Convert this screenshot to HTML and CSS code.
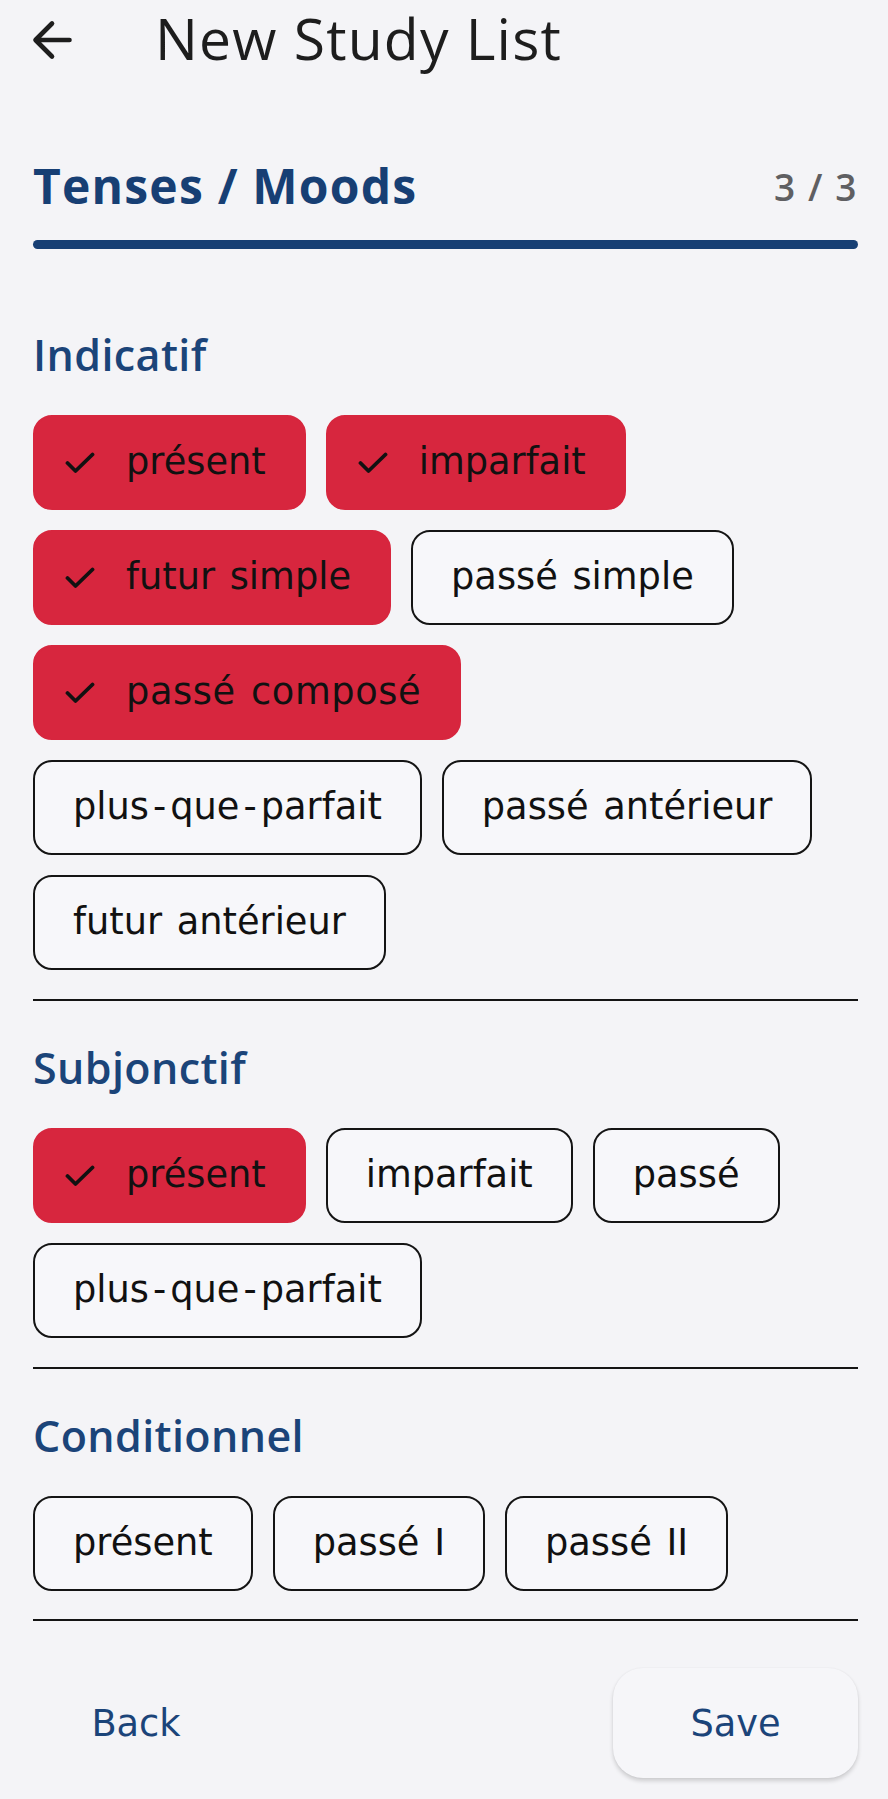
FILE: index.html
```html
<!DOCTYPE html>
<html lang="fr">
<head>
<meta charset="utf-8">
<title>New Study List</title>
<link rel="stylesheet" href="styles.css">
</head>
<body>
<div class="page">
  <header class="appbar">
    <svg class="back-icon" width="44" height="44" viewBox="0 0 44 44" aria-hidden="true">
      <path d="M38.5 22H5.5M21 5.5L4.5 22L21 38.5" fill="none" stroke="#1d1d1d" stroke-width="4.6" stroke-linecap="round" stroke-linejoin="round"/>
    </svg>
    <h1 class="title">New Study List</h1>
  </header>

  <main class="content">
    <div class="step-head">
      <h2 class="step-title">Tenses / Moods</h2>
      <span class="step-count">3 / 3</span>
    </div>
    <div class="progress"></div>

    <section class="group">
      <h3 class="group-label">Indicatif</h3>
      <div class="chips">
        <span class="chip selected"><svg class="check" width="30" height="22" viewBox="0 0 30 22"><polyline points="2.5,11 10.5,19 27.5,2.5" fill="none" stroke="#111" stroke-width="3.8" stroke-linecap="round" stroke-linejoin="round"/></svg>présent</span>
        <span class="chip selected"><svg class="check" width="30" height="22" viewBox="0 0 30 22"><polyline points="2.5,11 10.5,19 27.5,2.5" fill="none" stroke="#111" stroke-width="3.8" stroke-linecap="round" stroke-linejoin="round"/></svg>imparfait</span>
        <span class="chip selected"><svg class="check" width="30" height="22" viewBox="0 0 30 22"><polyline points="2.5,11 10.5,19 27.5,2.5" fill="none" stroke="#111" stroke-width="3.8" stroke-linecap="round" stroke-linejoin="round"/></svg>futur simple</span>
        <span class="chip">passé simple</span>
        <span class="chip selected wide"><svg class="check" width="30" height="22" viewBox="0 0 30 22"><polyline points="2.5,11 10.5,19 27.5,2.5" fill="none" stroke="#111" stroke-width="3.8" stroke-linecap="round" stroke-linejoin="round"/></svg>passé composé</span>
        <span class="chip">plus<span class="hy">-</span>que<span class="hy">-</span>parfait</span>
        <span class="chip">passé antérieur</span>
        <span class="chip">futur antérieur</span>
      </div>
      <div class="divider"></div>
    </section>

    <section class="group">
      <h3 class="group-label">Subjonctif</h3>
      <div class="chips">
        <span class="chip selected"><svg class="check" width="30" height="22" viewBox="0 0 30 22"><polyline points="2.5,11 10.5,19 27.5,2.5" fill="none" stroke="#111" stroke-width="3.8" stroke-linecap="round" stroke-linejoin="round"/></svg>présent</span>
        <span class="chip">imparfait</span>
        <span class="chip">passé</span>
        <span class="chip">plus<span class="hy">-</span>que<span class="hy">-</span>parfait</span>
      </div>
      <div class="divider"></div>
    </section>

    <section class="group">
      <h3 class="group-label">Conditionnel</h3>
      <div class="chips">
        <span class="chip">présent</span>
        <span class="chip">passé I</span>
        <span class="chip">passé II</span>
      </div>
      <div class="divider last"></div>
    </section>

    <footer class="actions">
      <button class="btn-text">Back</button>
      <button class="btn-save">Save</button>
    </footer>
  </main>
</div>
</body>
</html>
```

FILE: styles.css
```css
html, body {
  margin: 0;
  padding: 0;
  background: #f4f4f7;
}

body {
  font-family: "Open Sans", "Noto Sans", sans-serif;
  color: #111;
}

.page {
  width: 888px;
  min-height: 1799px;
}

.appbar {
  height: 80px;
  display: flex;
  align-items: center;
  padding-left: 31px;
}

.back-icon {
  flex: none;
  display: block;
}

.title {
  margin: 0 0 4px 80px;
  font-size: 57px;
  font-weight: 400;
  letter-spacing: 1.2px;
  line-height: 70px;
  color: #1d1d1d;
}

.content {
  padding: 0 30px 0 33px;
}

.step-head {
  margin-top: 76px;
  height: 60px;
  display: flex;
  align-items: center;
  justify-content: space-between;
}

.step-title {
  margin: 0;
  font-size: 48px;
  font-weight: 700;
  letter-spacing: 1.2px;
  line-height: 60px;
  color: #173f74;
}

.step-count {
  font-size: 37px;
  font-weight: 600;
  letter-spacing: 1.6px;
  color: #5f5f62;
}

.progress {
  margin-top: 24px;
  height: 9px;
  border-radius: 5px;
  background: #173f74;
}

.group {
  padding-top: 42px;
}

.group:first-of-type {
  padding-top: 81px;
}

.group-label {
  margin: 0;
  height: 50px;
  line-height: 50px;
  font-size: 43px;
  font-weight: 600;
  letter-spacing: 0.4px;
  color: #1b4479;
}

.chips {
  margin-top: 35px;
  display: flex;
  flex-wrap: wrap;
  gap: 20px 20px;
}

.chip {
  box-sizing: border-box;
  height: 95px;
  display: inline-flex;
  align-items: center;
  padding: 0 38px;
  border: 2px solid #141414;
  border-radius: 19px;
  background: #f7f7fa;
  font-family: "DejaVu Sans", "Open Sans", sans-serif;
  font-size: 36.75px;
  line-height: 1;
  word-spacing: 3px;
  color: #111;
  white-space: nowrap;
}

.chip .hy {
  margin: 0 4px;
}

.chip.selected {
  background: #d7263e;
  border-color: #d7263e;
  padding-left: 30px;
}

.chip.wide {
  letter-spacing: 0.6px;
}

.check {
  flex: none;
  display: block;
  margin-right: 31px;
}

.divider {
  margin-top: 29px;
  height: 2px;
  background: #141414;
}

.divider.last {
  margin-top: 28px;
}

.actions {
  margin-top: 47px;
  display: flex;
  justify-content: space-between;
  align-items: center;
}

.btn-text,
.btn-save {
  font-family: "DejaVu Sans", "Open Sans", sans-serif;
  font-size: 36.75px;
  color: #1b4479;
  height: 110px;
  border: none;
  cursor: pointer;
}

.btn-text {
  width: 206px;
  background: transparent;
}

.btn-save {
  width: 245px;
  border-radius: 30px;
  background: #f6f6f9;
  box-shadow: 0 3px 4px rgba(0, 0, 0, 0.16), 0 0 2px rgba(0, 0, 0, 0.06);
}
```
